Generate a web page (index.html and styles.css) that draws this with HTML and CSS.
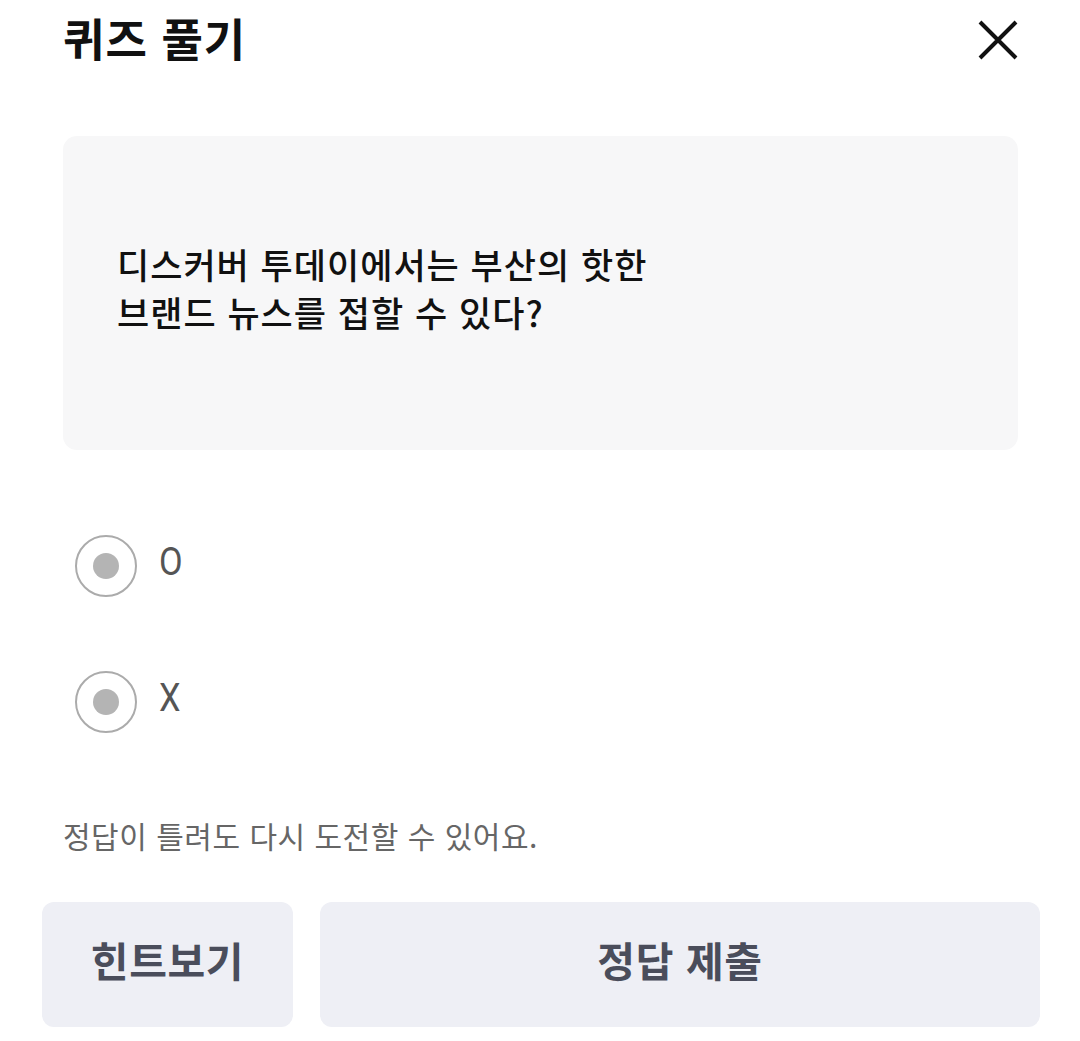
FILE: index.html
```html
<!DOCTYPE html>
<html lang="ko">
<head>
<meta charset="UTF-8">
<meta name="viewport" content="width=device-width, initial-scale=1.0">
<title>퀴즈 풀기</title>
<link rel="stylesheet" href="styles.css">
</head>
<body>
  <div class="page">
    <div class="inner">
      <div class="header">
        <h1 class="title">퀴즈 풀기</h1>
        <button class="close" type="button" aria-label="닫기">
          <svg width="40" height="40" viewBox="0 0 40 40">
            <path d="M2 2 L38 38 M38 2 L2 38" stroke="#111" stroke-width="4" fill="none"/>
          </svg>
        </button>
      </div>

      <div class="question">
        <p>디스커버 투데이에서는 부산의 핫한<br>브랜드 뉴스를 접할 수 있다?</p>
      </div>

      <div class="options">
        <label class="option">
          <span class="radio"><span class="dot"></span></span>
          <span class="label">O</span>
        </label>
        <label class="option">
          <span class="radio"><span class="dot"></span></span>
          <span class="label">X</span>
        </label>
      </div>

      <p class="notice">정답이 틀려도 다시 도전할 수 있어요.</p>
    </div>

    <div class="actions">
      <button class="btn btn-hint" type="button">힌트보기</button>
      <button class="btn btn-submit" type="button">정답 제출</button>
    </div>
  </div>
</body>
</html>
```

FILE: styles.css
```css
body {
  margin: 0;
  padding: 0;
  background-color: #fff;
  font-family: "Noto Sans CJK KR", "Noto Sans", sans-serif;
  color: #111;
}

.page {
  padding: 0 40px 0 42px;
}

.inner {
  padding: 0 22px 0 21px;
}

.header {
  height: 80px;
  display: flex;
  justify-content: space-between;
  align-items: center;
}

.title {
  margin: -4px 0 0;
  font-size: 45px;
  font-weight: 700;
  line-height: 1.3;
  letter-spacing: 1px;
}

.close {
  border: 0;
  background: none;
  padding: 0;
  width: 40px;
  height: 40px;
  display: flex;
  cursor: pointer;
}

.question {
  margin-top: 56px;
  height: 314px;
  background-color: #f7f7f8;
  border-radius: 14px;
  display: flex;
  align-items: center;
  padding: 0 54px 10px;
  box-sizing: border-box;
}

.question p {
  margin: 0;
  font-size: 35px;
  font-weight: 500;
  line-height: 48px;
  letter-spacing: 1px;
  color: #111;
}

.options {
  margin-top: 85px;
  padding-left: 12px;
  display: flex;
  flex-direction: column;
  gap: 74px;
}

.option {
  display: flex;
  align-items: center;
  gap: 22px;
}

.radio {
  width: 62px;
  height: 62px;
  box-sizing: border-box;
  border: 2px solid #ababab;
  border-radius: 50%;
  display: flex;
  align-items: center;
  justify-content: center;
}

.dot {
  width: 26px;
  height: 26px;
  border-radius: 50%;
  background-color: #b4b4b4;
}

.label {
  font-family: Roboto, "Noto Sans", sans-serif;
  font-size: 39px;
  color: #555;
  line-height: 1;
  margin-top: -8px;
  display: inline-block;
  transform: scaleX(0.88);
  transform-origin: left center;
}

.notice {
  margin: 82px 0 0;
  font-size: 30px;
  line-height: 40px;
  letter-spacing: 0.5px;
  color: #666;
}

.actions {
  margin-top: 47px;
  display: flex;
  gap: 27px;
}

.btn {
  height: 125px;
  border: 0;
  border-radius: 12px;
  background-color: #eeeff5;
  color: #4a4d5b;
  font-family: "Noto Sans CJK KR", "Noto Sans", sans-serif;
  font-size: 41px;
  font-weight: 700;
  letter-spacing: 0.6px;
  padding: 0 0 12px;
  cursor: pointer;
}

.btn-hint {
  width: 251px;
}

.btn-submit {
  flex: 1;
}
```
